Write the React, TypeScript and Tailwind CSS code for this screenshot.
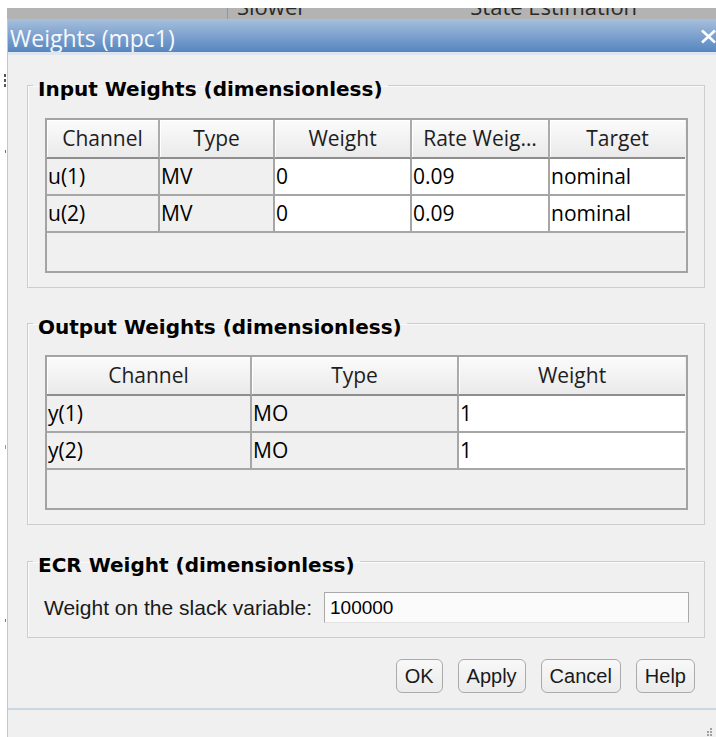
import React from "react";

type Cell = { text: string; editable?: boolean };

const inputRows: Cell[][] = [
  [{ text: "u(1)" }, { text: "MV" }, { text: "0", editable: true }, { text: "0.09", editable: true }, { text: "nominal", editable: true }],
  [{ text: "u(2)" }, { text: "MV" }, { text: "0", editable: true }, { text: "0.09", editable: true }, { text: "nominal", editable: true }],
];

const outputRows: Cell[][] = [
  [{ text: "y(1)" }, { text: "MO" }, { text: "1", editable: true }],
  [{ text: "y(2)" }, { text: "MO" }, { text: "1", editable: true }],
];

function WeightTable({
  gridCols,
  headers,
  rows,
}: {
  gridCols: string;
  headers: string[];
  rows: Cell[][];
}) {
  const last = headers.length - 1;
  return (
    <div className="flex flex-col h-[155px] border-2 border-[#a3a3a3] bg-[#f0f0f0]">
      <div className={`grid ${gridCols}`}>
        {headers.map((h, i) => (
          <div
            key={h}
            className={`h-[39px] flex items-center justify-center border-b-2 border-b-[#8e8e8e] bg-linear-to-b from-[#fbfbfb] to-[#eaeaea] shadow-[inset_1px_1px_0_#ffffff] text-[21px] text-[#1e1e1e] font-['Open_Sans',sans-serif] whitespace-nowrap overflow-hidden ${
              i < last ? "border-r-2 border-r-[#ababab]" : ""
            }`}
          >
            {h}
          </div>
        ))}
        {rows.map((row, r) =>
          row.map((c, i) => (
            <div
              key={`${r}-${i}`}
              className={`h-[37px] flex items-center pl-[1px] border-b-2 border-b-[#a6a6a6] text-[21px] text-black font-['Open_Sans',sans-serif] ${
                c.editable ? "bg-white" : "bg-[#f0f0f0]"
              } ${i < last ? "border-r-2 border-r-[#a6a6a6]" : ""}`}
            >
              {c.text}
            </div>
          )),
        )}
      </div>
      <div className="flex-1" />
    </div>
  );
}

function GroupBox({
  title,
  className,
  bodyClass,
  children,
}: {
  title: string;
  className: string;
  bodyClass: string;
  children: React.ReactNode;
}) {
  return (
    <fieldset className={`ml-[19px] mr-[11px] border border-[#cdcdcd] shadow-[inset_1px_1px_0_#fafafa] ${className}`}>
      <legend className="ml-[5px] px-[5px] pt-[8px] leading-[24px] text-[20px] font-bold text-black font-['DejaVu_Sans',sans-serif]">
        {title}
      </legend>
      <div className={bodyClass}>{children}</div>
    </fieldset>
  );
}

function DlgButton({ label }: { label: string }) {
  return (
    <button className="h-[34px] px-[8px] rounded-[6px] border border-[#ababab] bg-linear-to-b from-[#f8f8f8] to-[#ebebeb] text-[20px] text-[#1a1a1a] font-['Liberation_Sans',Arial,sans-serif]">
      {label}
    </button>
  );
}

export default function App() {
  return (
    <div className="w-[716px] h-[737px] bg-white flex flex-col overflow-hidden">
      <div className="h-[8px] shrink-0" />
      <div className="flex flex-1 min-h-0">
        {/* left gutter with bits of the window behind */}
        <div className="w-[7px] shrink-0 flex flex-col items-end pr-[1px]">
          <div className="mt-[66px] w-[2px] h-[3px] bg-[#555]" />
          <div className="mt-[2px] w-[2px] h-[3px] bg-[#555]" />
          <div className="mt-[2px] w-[2px] h-[3px] bg-[#555]" />
          <div className="mt-[63px] w-[1px] h-[3px] bg-[#777]" />
          <div className="mt-[292px] w-[1px] h-[4px] bg-[#999]" />
          <div className="mt-[170px] w-[1px] h-[3px] bg-[#777]" />
        </div>

        <div className="flex-1 flex flex-col min-w-0">
          {/* strip of the parent window; only the lower part of its labels shows */}
          <div className="h-[11px] shrink-0 bg-[#b3b3b3] flex items-start overflow-hidden text-[22px] leading-[22px] text-[#2a2a2a] font-['Open_Sans',sans-serif]">
            <div className="w-[221px] h-full border-r border-[#969696]" />
            <span className="ml-[9px] -mt-[13px]">Slower</span>
            <span className="ml-[164px] -mt-[13px] whitespace-nowrap">State Estimation</span>
          </div>

          {/* dialog */}
          <div className="flex-1 flex flex-col border-l border-[#b8c9de] bg-[#f0f0f0] min-h-0">
            <div className="h-[33px] shrink-0 flex items-start justify-between bg-linear-to-b from-[#a6bfdc] to-[#5686c0]">
              <span className="pl-[2px] pt-[5px] leading-[28px] text-[23px] text-[#f7f9fc] font-['Open_Sans',sans-serif]">
                Weights (mpc1)
              </span>
              <svg width="16" height="15" viewBox="0 0 16 15" className="mt-[10px]">
                <path d="M2 1.5 L15 13.5 M15 1.5 L2 13.5" stroke="#ffffff" strokeWidth="2.6" fill="none" />
              </svg>
            </div>
            <div className="h-[3px] shrink-0 bg-[#dfe6ee]" />

            <div className="flex-1 flex flex-col">
              <GroupBox title="Input Weights (dimensionless)" className="mt-[14px]" bodyClass="pt-[17px] pl-[17px] pr-[16px] pb-[14px]">
                <WeightTable
                  gridCols="grid-cols-[113px_115px_137px_138px_135px]"
                  headers={["Channel", "Type", "Weight", "Rate Weig…", "Target"]}
                  rows={inputRows}
                />
              </GroupBox>

              <GroupBox title="Output Weights (dimensionless)" className="mt-[19px]" bodyClass="pt-[16px] pl-[17px] pr-[16px] pb-[14px]">
                <WeightTable
                  gridCols="grid-cols-[205px_207px_226px]"
                  headers={["Channel", "Type", "Weight"]}
                  rows={outputRows}
                />
              </GroupBox>

              <GroupBox title="ECR Weight (dimensionless)" className="mt-[20px]" bodyClass="pt-[15px] pl-[16px] pr-[15px] pb-[13px] flex items-center">
                <span className="w-[280px] shrink-0 text-[21px] text-[#1a1a1a] font-['Liberation_Sans',Arial,sans-serif] whitespace-nowrap">
                  Weight on the slack variable:
                </span>
                <div className="flex-1 h-[31px] flex items-center pl-[5px] bg-[#fbfbfb] border border-[#a9a9a9] border-b-[#e2e2e2] text-[19px] text-black font-['Liberation_Sans',Arial,sans-serif]">
                  100000
                </div>
              </GroupBox>

              <div className="mt-[21px] flex justify-end gap-[15px] pr-[21px]">
                <DlgButton label="OK" />
                <DlgButton label="Apply" />
                <DlgButton label="Cancel" />
                <DlgButton label="Help" />
              </div>
            </div>

            {/* status strip with size grip */}
            <div className="h-[29px] shrink-0 border-t-2 border-[#ccd7e4] flex justify-end items-end pr-[3px] pb-[1px]">
              <svg width="8" height="8" viewBox="0 0 8 8">
                <rect x="5" y="0" width="2" height="2" fill="#a0a0a0" />
                <rect x="5" y="3" width="2" height="2" fill="#a0a0a0" />
                <rect x="2" y="3" width="2" height="2" fill="#a0a0a0" />
                <rect x="5" y="6" width="2" height="2" fill="#a0a0a0" />
                <rect x="2" y="6" width="2" height="2" fill="#a0a0a0" />
              </svg>
            </div>
          </div>
        </div>
      </div>
    </div>
  );
}
